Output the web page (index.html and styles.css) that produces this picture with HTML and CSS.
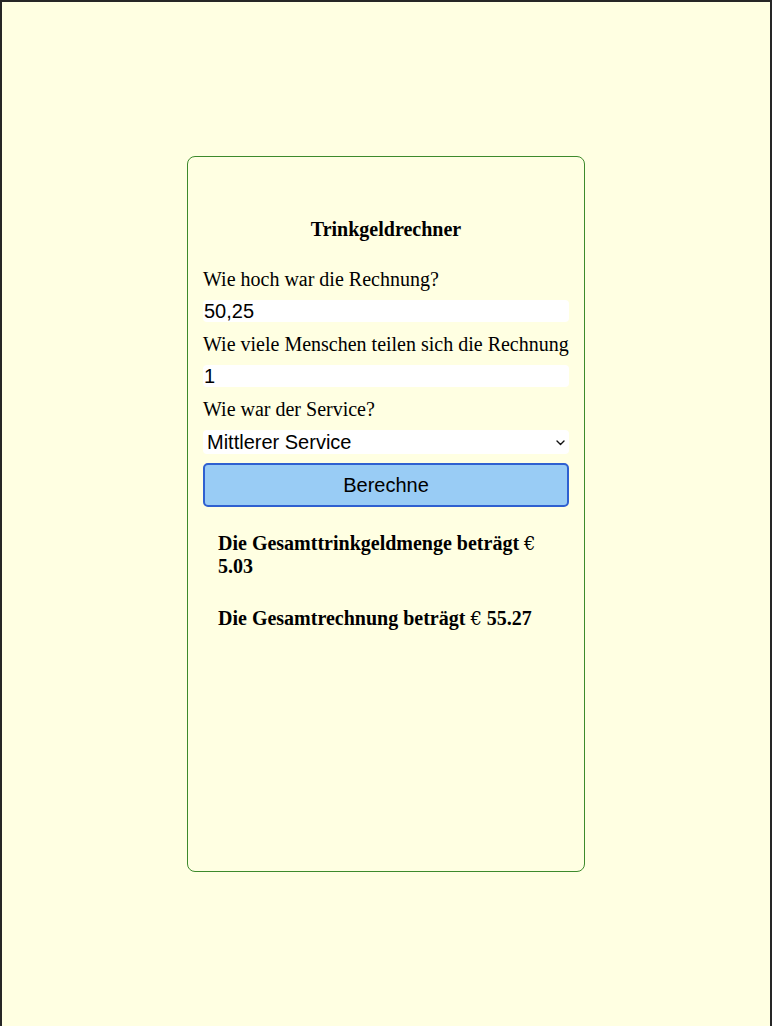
FILE: index.html
```html
<!DOCTYPE html>
<html lang="de">
<head>
<meta charset="utf-8">
<title>Trinkgeldrechner</title>
<link rel="stylesheet" href="styles.css">
</head>
<body>
<div class="frame">
  <main class="card">
    <h3 class="title">Trinkgeldrechner</h3>
    <form class="form">
      <label class="label" for="bill">Wie hoch war die Rechnung?</label>
      <input class="field" id="bill" type="text" value="50,25">
      <label class="label" for="people">Wie viele Menschen teilen sich die Rechnung</label>
      <input class="field" id="people" type="text" value="1">
      <label class="label" for="service">Wie war der Service?</label>
      <div class="select-wrap">
        <select class="select" id="service">
          <option>Mittlerer Service</option>
        </select>
        <svg class="chevron" width="9" height="6" viewBox="0 0 9 6"><path d="M1 1 L4.5 4.5 L8 1" fill="none" stroke="#111" stroke-width="1.4" stroke-linecap="round" stroke-linejoin="round"/></svg>
      </div>
      <button class="btn" type="button">Berechne</button>
    </form>
    <div class="results">
      <p class="result">Die Gesamttrinkgeldmenge beträgt <span class="euro">€</span> 5.03</p>
      <p class="result result-total">Die Gesamtrechnung beträgt <span class="euro">€</span> 55.27</p>
    </div>
  </main>
</div>
</body>
</html>
```

FILE: styles.css
```css
html, body {
  margin: 0;
  padding: 0;
}

body {
  background: #ffffe2;
  font-family: "Liberation Serif", "Times New Roman", serif;
  color: #000;
}

.frame {
  box-sizing: border-box;
  min-height: 1026px;
  border-top: 2px solid #262626;
  border-left: 2px solid #262626;
  border-right: 2px solid #262626;
  background: #ffffe2;
  display: flex;
  justify-content: center;
  align-items: flex-start;
  padding-top: 154px;
}

.card {
  box-sizing: border-box;
  width: 398px;
  height: 716px;
  border: 1px solid #3d8a2c;
  border-radius: 8px;
  padding: 62px 15px 0;
  display: flex;
  flex-direction: column;
}

.title {
  margin: 0 0 28px;
  font-size: 20px;
  line-height: 21px;
  font-weight: bold;
  text-align: center;
}

.form {
  display: flex;
  flex-direction: column;
}

.label {
  font-size: 20px;
  line-height: 23px;
  margin-bottom: 9px;
}

.field {
  box-sizing: border-box;
  height: 22px;
  margin: 0 0 11px;
  padding: 0 1px;
  border: none;
  border-radius: 4px;
  background: #fff;
  font-family: "Liberation Sans", Arial, sans-serif;
  font-size: 20px;
  color: #000;
  outline: none;
}

.select-wrap {
  position: relative;
  margin-bottom: 9px;
}

.select {
  box-sizing: border-box;
  width: 100%;
  height: 24px;
  padding: 0 4px;
  border: none;
  border-radius: 4px;
  background: #fff;
  font-family: "Liberation Sans", Arial, sans-serif;
  font-size: 20px;
  color: #000;
  appearance: none;
  -webkit-appearance: none;
  display: block;
}

.chevron {
  position: absolute;
  right: 4px;
  top: 10px;
  pointer-events: none;
}

.btn {
  box-sizing: border-box;
  height: 44px;
  border: 2px solid #2f60d0;
  border-radius: 5px;
  background: #99ccf5;
  font-family: "Liberation Sans", Arial, sans-serif;
  font-size: 20px;
  color: #000;
  padding: 0;
}

.results {
  padding: 25px 15px 0;
}

.result {
  margin: 0;
  font-size: 20px;
  line-height: 23px;
  font-weight: bold;
}

.euro {
  font-family: "DejaVu Serif", serif;
  font-weight: normal;
  font-size: 18px;
}

.result-total {
  margin-top: 29px;
}
```
